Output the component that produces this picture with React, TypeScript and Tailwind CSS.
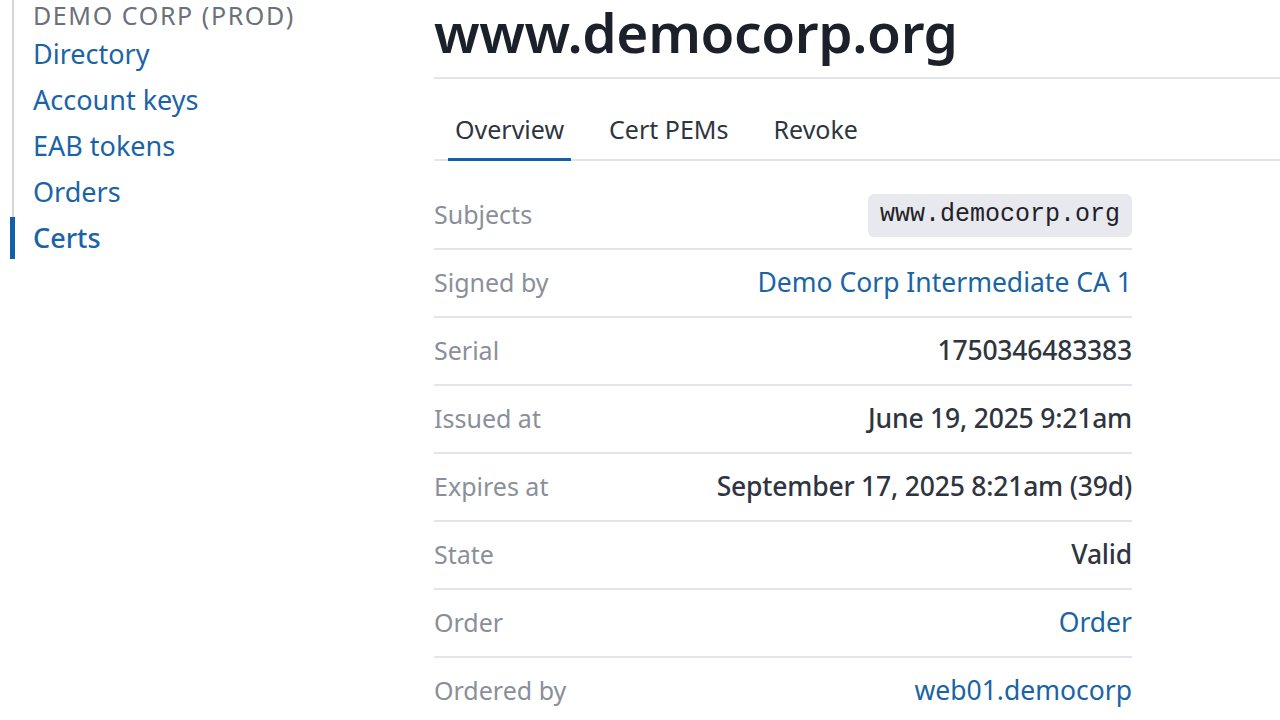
import React from 'react'

const font = { fontFamily: '"Noto Sans", Lato, sans-serif' }

const navItems = ['Directory', 'Account keys', 'EAB tokens', 'Orders']

const tabs = ['Overview', 'Cert PEMs', 'Revoke']

const rows: { label: string; value: string; kind: 'text' | 'link' | 'code' }[] = [
  { label: 'Subjects', value: 'www.democorp.org', kind: 'code' },
  { label: 'Signed by', value: 'Demo Corp Intermediate CA 1', kind: 'link' },
  { label: 'Serial', value: '1750346483383', kind: 'text' },
  { label: 'Issued at', value: 'June 19, 2025 9:21am', kind: 'text' },
  { label: 'Expires at', value: 'September 17, 2025 8:21am (39d)', kind: 'text' },
  { label: 'State', value: 'Valid', kind: 'text' },
  { label: 'Order', value: 'Order', kind: 'link' },
  { label: 'Ordered by', value: 'web01.democorp', kind: 'link' },
]

const Sidebar: React.FC = () => (
  <aside className="w-[434px] shrink-0 pl-[10px]">
    <div className="flex flex-col">
      <div className="border-l-2 border-[#d4d6dc] ml-[2px] pl-[19px] pb-[3px]">
        <div className="text-[25px] leading-[30px] tracking-[1.6px] text-[#6b707a]">DEMO CORP (PROD)</div>
        {navItems.map((item) => (
          <div key={item} className="text-[27px] leading-[46px] text-[#1a64a6] pt-[1px] -mb-[1px]">
            {item}
          </div>
        ))}
      </div>
      <div className="border-l-[5px] border-[#1160a8] pl-[18px] text-[27px] leading-[42px] text-[#1a64a6] font-medium">
        Certs
      </div>
    </div>
  </aside>
)

export default function App() {
  return (
    <div className="flex min-h-screen bg-white overflow-hidden" style={font}>
      <Sidebar />
      <main className="flex-1">
        <h1 className="text-[55px] leading-[66px] font-semibold text-[#1b202b] -mt-[1px] pb-[12px] border-b-2 border-[#e4e5ea] tracking-[-0.4px]">
          www.democorp.org
        </h1>
        <div className="flex border-b-2 border-[#e4e5ea] pt-[28px] pl-[14px] gap-[31px]">
          {tabs.map((tab, i) => (
            <div
              key={tab}
              className={
                i === 0
                  ? 'px-[7px] pb-[7px] text-[25px] leading-[44px] text-[#2f3540] border-b-[3px] border-[#1160a8] -mb-[2px]'
                  : 'px-[7px] pb-[7px] text-[25px] leading-[44px] text-[#2f3540]'
              }
            >
              {tab}
            </div>
          ))}
        </div>
        <div className="w-[698px] mt-[21px]">
          {rows.map((r) => (
            <div key={r.label} className="flex items-center justify-between h-[68px] border-b-2 border-[#e4e5ea]">
              <span className="text-[25px] text-[#8a8f99]">{r.label}</span>
              {r.kind === 'code' ? (
                <span
                  className="bg-[#e8e9ee] rounded-md px-[12px] h-[43px] flex items-center text-[25px] text-[#1f2329]"
                  style={{ fontFamily: '"Liberation Mono", "DejaVu Sans Mono", monospace' }}
                >
                  {r.value}
                </span>
              ) : r.kind === 'link' ? (
                <span className="text-[26.5px] text-[#1a64a6]">{r.value}</span>
              ) : (
                <span className="text-[26.5px] font-medium text-[#2f3540] tracking-[-0.2px]">{r.value}</span>
              )}
            </div>
          ))}
        </div>
      </main>
    </div>
  )
}
